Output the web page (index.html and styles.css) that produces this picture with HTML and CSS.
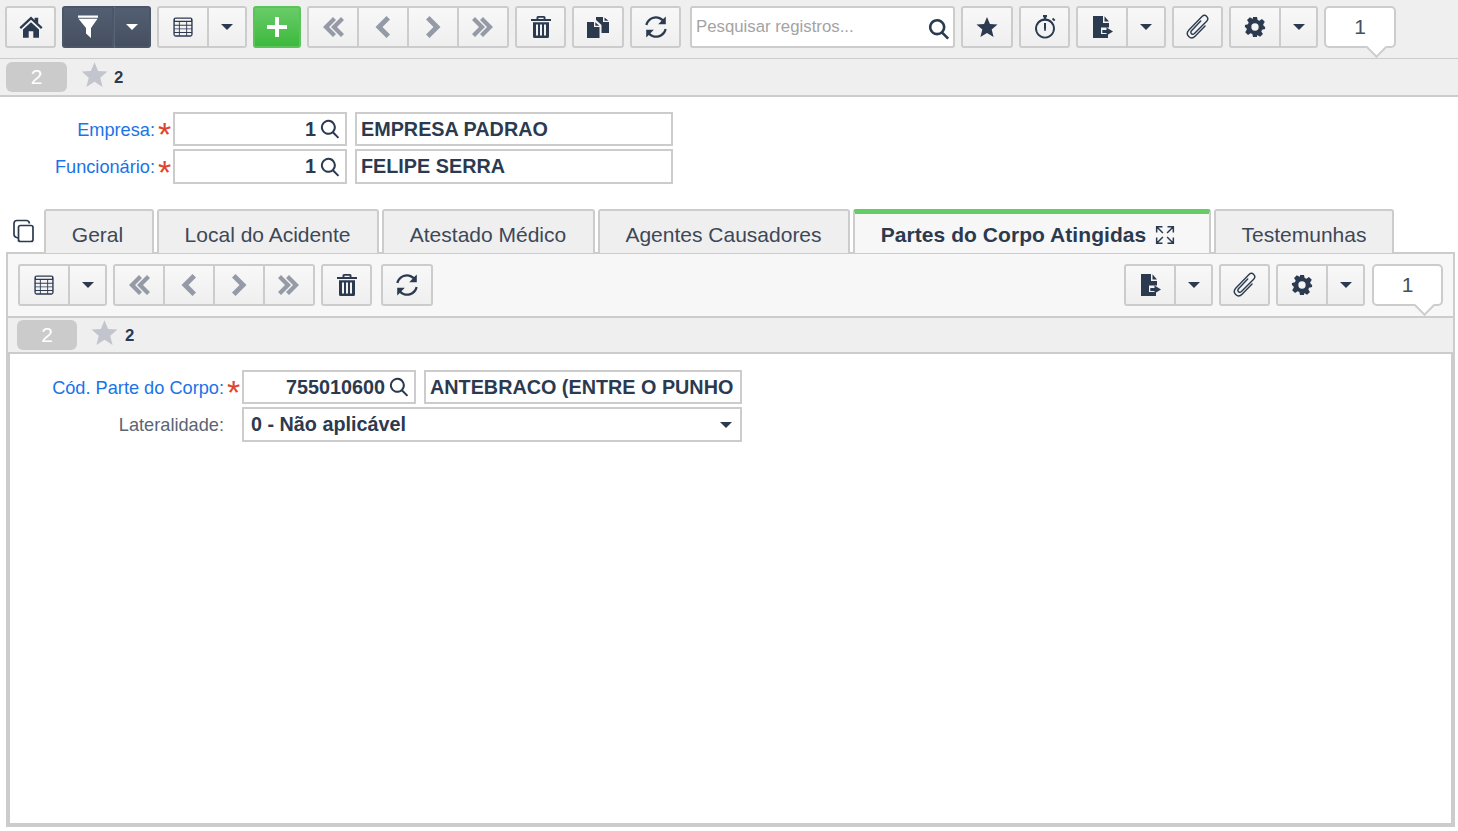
FILE: index.html
```html
<!DOCTYPE html>
<html lang="pt-BR">
<head>
<meta charset="utf-8">
<title>Partes do Corpo Atingidas</title>
<link rel="stylesheet" href="styles.css">
</head>
<body>
<svg class="defs" width="0" height="0" aria-hidden="true">
  <symbol id="i-home" viewBox="0 0 24 24"><path d="M12 1.500 15.600 4.900V2.800H19.200V8.200L23.500 12.300 22 14 12 4.800 2 14 .5 12.300ZM4 14.600 12 7.300 20 14.600V22.800H14.300V16.300H9.700V22.800H4Z"/></symbol>
  <symbol id="i-filter" viewBox="0 0 24 24"><path d="M2 .5H22V2.800H2ZM2.500 3.800H21.500L15 13V23L10 18.500V13Z"/></symbol>
  <symbol id="i-grid" viewBox="0 0 24 24"><path fill-rule="evenodd" d="M4 1.500H20Q22.500 1.500 22.500 4V20Q22.500 22.500 20 22.500H4Q1.500 22.500 1.500 20V4Q1.500 1.500 4 1.500ZM3 6.500V9.500H7.500V6.500ZM8.500 6.500V9.500H15.500V6.500ZM16.500 6.500V9.500H21V6.500ZM3 10.500V13.500H7.500V10.500ZM8.500 10.500V13.500H15.500V10.500ZM16.500 10.500V13.500H21V10.500ZM3 14.500V17.500H7.500V14.500ZM8.500 14.500V17.500H15.500V14.500ZM16.500 14.500V17.500H21V14.500ZM3 18.500V21H7.500V18.500ZM8.500 18.500V21H15.500V18.500ZM16.500 18.500V21H21V18.500ZM3.300 3V5.300H20.700V3Z"/></symbol>
  <symbol id="i-first" viewBox="0 0 24 24"><path d="M12 2 15 5 8 12 15 19 12 22 2 12ZM20 2 23 5 16 12 23 19 20 22 10 12Z"/></symbol>
  <symbol id="i-prev" viewBox="0 0 24 24"><path d="M15.500 1 19 4.500 11.500 12 19 19.500 15.500 23 4.500 12Z"/></symbol>
  <symbol id="i-next" viewBox="0 0 24 24"><path d="M8.500 1 5 4.500 12.500 12 5 19.500 8.500 23 19.500 12Z"/></symbol>
  <symbol id="i-last" viewBox="0 0 24 24"><path d="M12 2 9 5 16 12 9 19 12 22 22 12ZM4 2 1 5 8 12 1 19 4 22 14 12Z"/></symbol>
  <symbol id="i-trash" viewBox="0 0 24 24"><path fill-rule="evenodd" d="M9 1H15Q16.500 1 16.500 2.500V4H22V6H2V4H7.500V2.500Q7.500 1 9 1ZM9.400 2.800V4H14.600V2.800ZM4 7.200H20V21.500Q20 23 18.500 23H5.500Q4 23 4 21.500ZM7 9.500V20.500H9V9.500ZM11 9.500V20.500H13V9.500ZM15 9.500V20.500H17V9.500Z"/></symbol>
  <symbol id="i-copy" viewBox="0 0 24 24"><path d="M10 2H17V7H23V18H15.500V10L10 5ZM18.500 2.500 22.500 5.700H18.500ZM1 7H8V12H13.500V23H1ZM9.300 7.300 13.300 10.800H9.300Z"/></symbol>
  <symbol id="i-refresh" viewBox="0 0 24 24"><path d="M12 1.200C14.800 1.200 17.300 2.300 19.200 4.100L21.800 1.600V9.200H14.200L17.600 5.800C16.100 4.300 14.200 3.400 12 3.400 7.900 3.400 4.400 6.300 3.500 10.200L1.300 9.800C2.300 4.800 6.700 1.200 12 1.200ZM20.500 13.800 22.700 14.200C21.700 19.200 17.300 22.800 12 22.800 9.200 22.800 6.700 21.700 4.800 19.900L2.200 22.400V14.800H9.800L6.400 18.200C7.900 19.700 9.800 20.600 12 20.600 16.100 20.600 19.600 17.700 20.500 13.800Z"/></symbol>
  <symbol id="i-search" viewBox="0 0 24 24"><path fill-rule="evenodd" d="M10 1A9 9 0 0 1 17 15.600L23 21.600 21 23.500 15 17.500A9 9 0 1 1 10 1ZM10 3.800A6.200 6.200 0 1 0 10 16.200 6.200 6.200 0 0 0 10 3.800Z"/></symbol>
  <symbol id="i-lens" viewBox="0 0 24 24"><path fill-rule="evenodd" d="M10 1A9 9 0 0 1 16.900 15.700L23 21.800 21.300 23.500 15.200 17.400A9 9 0 1 1 10 1ZM10 3.400A6.600 6.600 0 1 0 10 16.600 6.600 6.600 0 0 0 10 3.400Z"/></symbol>
  <symbol id="i-star" viewBox="0 0 24 24"><path d="M12 1 15.200 8.800 23.500 9.400 17.100 14.800 19.200 23 12 18.500 4.800 23 6.900 14.800 .5 9.400 8.800 8.800Z"/></symbol>
  <symbol id="i-timer" viewBox="0 0 24 24"><path fill-rule="evenodd" d="M10 0H14V2.200H13.100V3.600A10 10 0 1 1 10.900 3.600V2.200H10ZM12 5.700A8 8 0 1 0 12 21.700 8 8 0 0 0 12 5.700ZM11 8H13V13.400L12.600 16H11.400L11 13.400ZM20.300 2.800 22.400 4.900 21 6.300 18.900 4.200Z"/></symbol>
  <symbol id="i-export" viewBox="0 0 24 24"><path d="M3 1H13V8H19V12.500H11V19H18V23H3ZM14.500 1.300 19 6.500H14.500ZM16.500 12.400 23 16.500 16.500 20.600V18H12.300V15H16.500Z"/></symbol>
  <symbol id="i-clip" viewBox="0 0 24 24"><path fill="none" stroke="currentColor" stroke-width="1.300" stroke-linecap="round" stroke-linejoin="round" d="M14.500 6.500 6 15.500C4.300 17.400 6.800 19.900 8.700 18.100L20 6.600C22.900 3.600 18.700-.6 15.700 2.300L3.600 14.800C-.4 19 5.200 24.600 9.300 20.500L18.500 11"/></symbol>
  <symbol id="i-gear" viewBox="0 0 24 24"><path fill-rule="evenodd" d="M9.800 1H14.200L14.900 4.300 16.800 5.100 19.600 3.300 22.700 6.400 20.900 9.200 21.700 11.100 23 11.800V14.200L19.700 14.900 18.900 16.800 20.700 19.600 17.600 22.700 14.800 20.900 14.200 21.200V23H9.800L9.100 19.700 7.200 18.900 4.400 20.700 1.300 17.600 3.100 14.800 2.300 12.900 1 12.200V9.800L4.300 9.100 5.100 7.200 3.300 4.400 6.400 1.300 9.200 3.100 9.800 2.800ZM12 8A4 4 0 1 0 12 16 4 4 0 0 0 12 8Z"/></symbol>
  <symbol id="i-pages" viewBox="0 0 24 24"><path fill="none" stroke="currentColor" stroke-width="1.700" stroke-linejoin="round" d="M6.500 22.500V8.500Q6.500 6.500 8.500 6.500H19Q21 6.500 21 8.500V20.500Q21 22.500 19 22.500H8.500Q6.500 22.500 6.500 20.500M6 19Q2 18 2 15.500V4.500Q2 1.500 5 1.500H14.500Q17 1.500 17.500 4.500"/></symbol>
  <symbol id="i-expand" viewBox="0 0 24 24"><path fill="none" stroke="currentColor" stroke-width="1.800" d="M2 9V2H9M2 2 9.500 9.500M15 2H22V9M22 2 14.500 9.500M2 15V22H9M2 22 9.500 14.500M22 15V22H15M22 22 14.500 14.500"/></symbol>
</svg>

<header class="main-toolbar">
  <a class="btn w51"><svg class="ic ic-24"><use href="#i-home"/></svg></a>
  <div class="btn-group dark">
    <a class="btn w52"><svg class="ic ic-24 white"><use href="#i-filter"/></svg></a>
    <a class="btn w37"><span class="caret"></span></a>
  </div>
  <div class="btn-group">
    <a class="btn w52"><svg class="ic ic-22"><use href="#i-grid"/></svg></a>
    <a class="btn w38"><span class="caret"></span></a>
  </div>
  <a class="btn add"><svg class="ic ic-24 white" viewBox="0 0 24 24"><path d="M10 2H14V10H22V14H14V22H10V14H2V10H10Z"/></svg></a>
  <div class="btn-group">
    <a class="btn w52"><svg class="ic ic-24 muted"><use href="#i-first"/></svg></a>
    <a class="btn w50"><svg class="ic ic-24 muted"><use href="#i-prev"/></svg></a>
    <a class="btn w50"><svg class="ic ic-24 muted"><use href="#i-next"/></svg></a>
    <a class="btn w50"><svg class="ic ic-24 muted"><use href="#i-last"/></svg></a>
  </div>
  <a class="btn w51"><svg class="ic ic-24"><use href="#i-trash"/></svg></a>
  <a class="btn w52"><svg class="ic ic-24"><use href="#i-copy"/></svg></a>
  <a class="btn w51"><svg class="ic ic-24"><use href="#i-refresh"/></svg></a>
  <div class="search">
    <span class="placeholder">Pesquisar registros...</span>
    <svg class="ic ic-22"><use href="#i-search"/></svg>
  </div>
  <a class="btn w52"><svg class="ic ic-22"><use href="#i-star"/></svg></a>
  <a class="btn w51"><svg class="ic ic-24"><use href="#i-timer"/></svg></a>
  <div class="btn-group">
    <a class="btn w52"><svg class="ic ic-24"><use href="#i-export"/></svg></a>
    <a class="btn w38"><span class="caret"></span></a>
  </div>
  <a class="btn w51"><svg class="ic ic-26"><use href="#i-clip"/></svg></a>
  <div class="btn-group">
    <a class="btn w52"><svg class="ic ic-22"><use href="#i-gear"/></svg></a>
    <a class="btn w37"><span class="caret"></span></a>
  </div>
  <div class="count">1</div>
</header>

<div class="info-bar">
  <span class="badge">2</span>
  <svg class="ic ic-27 star-muted"><use href="#i-star"/></svg>
  <b class="fav-count">2</b>
</div>

<section class="master-form">
  <div class="form-row">
    <label class="label link">Empresa:</label><span class="req">*</span>
    <div class="field code"><span>1</span><svg class="ic ic-20"><use href="#i-lens"/></svg></div>
    <div class="field desc">EMPRESA PADRAO</div>
  </div>
  <div class="form-row tall">
    <label class="label link">Funcionário:</label><span class="req">*</span>
    <div class="field code"><span>1</span><svg class="ic ic-20"><use href="#i-lens"/></svg></div>
    <div class="field desc">FELIPE SERRA</div>
  </div>
</section>

<nav class="tabs">
  <svg class="ic ic-24 tabs-icon"><use href="#i-pages"/></svg>
  <a class="tab t-geral">Geral</a>
  <a class="tab t-local">Local do Acidente</a>
  <a class="tab t-atestado">Atestado Médico</a>
  <a class="tab t-agentes">Agentes Causadores</a>
  <a class="tab active t-partes">Partes do Corpo Atingidas<svg class="ic ic-20"><use href="#i-expand"/></svg></a>
  <a class="tab t-test">Testemunhas</a>
</nav>

<main class="panel">
  <div class="panel-toolbar">
    <div class="btn-group">
      <a class="btn w52"><svg class="ic ic-22"><use href="#i-grid"/></svg></a>
      <a class="btn w37"><span class="caret"></span></a>
    </div>
    <div class="btn-group">
      <a class="btn w52"><svg class="ic ic-24 muted"><use href="#i-first"/></svg></a>
      <a class="btn w50"><svg class="ic ic-24 muted"><use href="#i-prev"/></svg></a>
      <a class="btn w50"><svg class="ic ic-24 muted"><use href="#i-next"/></svg></a>
      <a class="btn w50"><svg class="ic ic-24 muted"><use href="#i-last"/></svg></a>
    </div>
    <a class="btn w51"><svg class="ic ic-24"><use href="#i-trash"/></svg></a>
    <a class="btn w52 after-trash"><svg class="ic ic-24"><use href="#i-refresh"/></svg></a>
    <div class="btn-group push">
      <a class="btn w52"><svg class="ic ic-24"><use href="#i-export"/></svg></a>
      <a class="btn w37"><span class="caret"></span></a>
    </div>
    <a class="btn w51"><svg class="ic ic-26"><use href="#i-clip"/></svg></a>
    <div class="btn-group">
      <a class="btn w52"><svg class="ic ic-22"><use href="#i-gear"/></svg></a>
      <a class="btn w37"><span class="caret"></span></a>
    </div>
    <div class="count narrow">1</div>
  </div>
  <div class="panel-info">
    <span class="badge">2</span>
    <svg class="ic ic-27 star-muted"><use href="#i-star"/></svg>
    <b class="fav-count">2</b>
  </div>
  <div class="panel-body">
    <div class="form-row">
      <label class="label link wide">Cód. Parte do Corpo:</label><span class="req">*</span>
      <div class="field code"><span>755010600</span><svg class="ic ic-20"><use href="#i-lens"/></svg></div>
      <div class="field desc">ANTEBRACO (ENTRE O PUNHO</div>
    </div>
    <div class="form-row tall">
      <label class="label wide plain">Lateralidade:</label><span class="req blank"></span>
      <div class="field select"><span>0 - Não aplicável</span><span class="caret"></span></div>
    </div>
  </div>
</main>
</body>
</html>
```

FILE: styles.css
```css
* { box-sizing: border-box; }
html, body { margin: 0; padding: 0; background: #fff; }
body {
  width: 1458px;
  height: 831px;
  overflow: hidden;
  font-family: "Liberation Sans", Arial, sans-serif;
  color: #2c3a50;
}
.defs { position: absolute; }

.ic { display: block; fill: currentColor; color: #2c3a50; flex: none; }
.ic-20 { width: 20px; height: 20px; }
.ic-22 { width: 22px; height: 22px; }
.ic-24 { width: 24px; height: 24px; }
.ic-26 { width: 26px; height: 26px; }
.ic-27 { width: 27px; height: 27px; }
.white { color: #fff; }
.muted { color: #959ba6; }
.star-muted { color: #c2c5ce; }

.main-toolbar {
  display: flex;
  gap: 6px;
  height: 59px;
  padding: 6px 5px 0;
  background: #f0efef;
  border-bottom: 1px solid #ccc;
}
.btn {
  display: flex;
  align-items: center;
  justify-content: center;
  height: 42px;
  border: 2px solid #ccc;
  border-radius: 3px;
  background: linear-gradient(#f8f8f8, #efefef);
}
.w37 { width: 37px; }
.w38 { width: 38px; }
.w50 { width: 50px; }
.w51 { width: 51px; }
.w52 { width: 52px; }
.btn-group { display: flex; }
.btn-group .btn { border-radius: 0; }
.btn-group .btn + .btn { border-left: 0; }
.btn-group .btn:first-child { border-radius: 3px 0 0 3px; }
.btn-group .btn:last-child { border-radius: 0 3px 3px 0; }
.dark .btn { background: linear-gradient(#535f72, #454f60); border-color: #4b5668; }
.dark .btn + .btn { border-left: 1px solid #5a6577; }
.dark .caret { border-top-color: #fff; }
.add {
  width: 48px;
  background: linear-gradient(#69cc69, #3cb93c);
  border-color: #5ac45a;
}
.caret {
  display: block;
  width: 0;
  height: 0;
  border-left: 6px solid transparent;
  border-right: 6px solid transparent;
  border-top: 6px solid #2c3a50;
}

.search {
  display: flex;
  align-items: center;
  justify-content: space-between;
  width: 265px;
  height: 42px;
  margin-left: 3px;
  padding: 0 3px 0 4px;
  background: #fff;
  border: 2px solid #ccc;
  border-radius: 3px;
}
.search .ic { margin-top: 3px; }
.placeholder { font-size: 16.8px; color: #a3a3a3; }

.count {
  position: relative;
  width: 72px;
  height: 42px;
  border: 2px solid #ccc;
  border-radius: 5px;
  background: #fff;
  font-size: 21px;
  line-height: 37px;
  text-align: center;
  color: #44505f;
}
.count.narrow { width: 71px; margin-left: 1px; }
.count::after {
  content: "";
  position: absolute;
  left: 43px;
  top: 32px;
  width: 13px;
  height: 13px;
  background: #fff;
  border-right: 2px solid #ccc;
  border-bottom: 2px solid #ccc;
  transform: rotate(45deg);
}

.info-bar {
  display: flex;
  align-items: center;
  height: 38px;
  padding-left: 6px;
  background: #f0efef;
  border-bottom: 2px solid #ccc;
}
.badge {
  width: 61px;
  height: 30px;
  border-radius: 6px;
  background: #cbcbcb;
  color: #fff;
  font-size: 21px;
  line-height: 30px;
  text-align: center;
}
.info-bar .ic { margin: -5px 0 0 14px; }
.fav-count { margin: 2px 0 0 6px; font-size: 16.8px; font-weight: 700; color: #2c3a50; }

.master-form { padding-top: 15px; height: 112px; }
.form-row { display: flex; align-items: center; height: 34px; }
.form-row.tall { height: 35px; margin-top: 3px; }
.label { width: 155px; margin-top: 2px; text-align: right; font-size: 18.2px; }
.label.wide { width: 214px; }
.link { color: #1a73e8; }
.plain { color: #5b6573; }
.req {
  width: 18px;
  height: 34px;
  padding: 5px 0 0 3px;
  color: #e0442e;
  font-size: 34px;
  line-height: 34px;
}
.field {
  display: flex;
  align-items: center;
  height: 100%;
  border: 2px solid #ccc;
  background: #fff;
  font-size: 19.8px;
  font-weight: 700;
  color: #2c3a50;
}
.code { width: 174px; justify-content: flex-end; gap: 4px; padding-right: 5px; }
.desc { width: 318px; margin-left: 8px; padding-left: 4px; white-space: nowrap; overflow: hidden; }
.select { width: 500px; justify-content: space-between; padding: 0 8px 0 7px; }

.tabs {
  display: flex;
  gap: 3px;
  height: 44px;
  padding-left: 12px;
  position: relative;
  z-index: 1;
}
.tabs-icon { margin: 10px 5px 0 0; }
.tab {
  display: block;
  height: 44px;
  padding-top: 11px;
  text-align: center;
  background: #f0efef;
  border: 2px solid #ccc;
  border-bottom: 0;
  border-radius: 3px 3px 0 0;
  font-size: 21px;
  line-height: 26px;
  color: #3c4858;
  white-space: nowrap;
}
.t-geral { width: 110px; padding-right: 3px; }
.t-local { width: 222px; padding-right: 1px; }
.t-atestado { width: 213px; padding-right: 1px; }
.t-agentes { width: 252px; padding-right: 1px; }
.t-partes { width: 358px; }
.t-test { width: 180px; }
.tab.active {
  display: flex;
  align-items: flex-start;
  justify-content: center;
  gap: 9px;
  padding: 8px 8px 0 0;
  background: #f7f7f7;
  border-top: 5px solid #66cc66;
  font-weight: 700;
  letter-spacing: .06px;
  color: #2c3a50;
}
.tab.active .ic { margin-top: 3px; }

.panel {
  width: 1449px;
  height: 575px;
  margin: -1px 0 0 6px;
  border: 2px solid #ccc;
  display: flex;
  flex-direction: column;
}
.panel-toolbar {
  display: flex;
  gap: 6px;
  height: 62px;
  flex: none;
  padding: 10px;
  background: #f7f7f7;
}
.after-trash { margin-left: 3px; }
.push { margin-left: auto; }
.panel-info {
  display: flex;
  align-items: center;
  flex: none;
  height: 38px;
  padding-left: 9px;
  background: #f0efef;
  border-top: 2px solid #ccc;
  border-bottom: 2px solid #ccc;
}
.panel-info .badge { width: 60px; }
.panel-info .ic { margin: -5px 0 0 14px; }
.panel-info .fav-count { margin-left: 7px; }
.panel-body {
  flex: 1;
  padding-top: 16px;
  background: #fff;
  border: 2px solid #ccc;
  border-top: 0;
}
```
